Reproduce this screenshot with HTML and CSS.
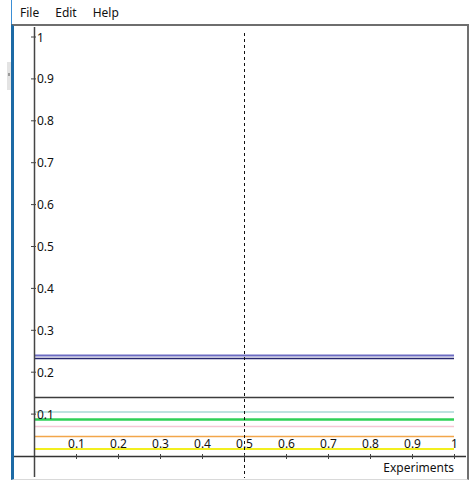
FILE: index.html
```html
<!DOCTYPE html>
<html lang="en">
<head>
<meta charset="utf-8">
<title>Experiments</title>
<link rel="stylesheet" href="styles.css">
</head>
<body>
<div class="app">
  <aside class="gutter">
    <div class="thumb"><span class="grip"></span></div>
  </aside>
  <div class="main">
    <nav class="menubar">
      <span class="menu-item">File</span>
      <span class="menu-item">Edit</span>
      <span class="menu-item">Help</span>
    </nav>
    <section class="panel">
      <svg class="chart" width="453" height="453" viewBox="14 26 453 453" xmlns="http://www.w3.org/2000/svg">
        <!-- series -->
        <g class="series">
          <line x1="34" x2="454" y1="355.5" y2="355.5" stroke="#6b6bc2" stroke-width="2"/>
          <line x1="34" x2="454" y1="358.5" y2="358.5" stroke="#26266e" stroke-width="1.3"/>
          <line x1="34" x2="454" y1="397.5" y2="397.5" stroke="#3c3c3c" stroke-width="1.3"/>
          <line x1="34" x2="454" y1="412" y2="412" stroke="#a9d9d6" stroke-width="1.5"/>
          <line x1="34" x2="454" y1="419.5" y2="419.5" stroke="#2fd057" stroke-width="2.5"/>
          <line x1="34" x2="454" y1="426.5" y2="426.5" stroke="#f6c6d4" stroke-width="1.3"/>
          <line x1="34" x2="454" y1="436.5" y2="436.5" stroke="#f2a64a" stroke-width="1.4"/>
          <line x1="34" x2="454" y1="449" y2="449" stroke="#f2ef1e" stroke-width="2"/>
        </g>
        <!-- marker at 0.5 -->
        <line x1="244.5" x2="244.5" y1="33" y2="478" stroke="#111" stroke-width="1" stroke-dasharray="3 3"/>
        <!-- axes -->
        <line x1="34.5" x2="34.5" y1="27" y2="477" stroke="#444" stroke-width="1.5"/>
        <line x1="12" x2="466" y1="456.5" y2="456.5" stroke="#333" stroke-width="1.3"/>
        <g class="yticks" stroke="#444" stroke-width="1">
          <line x1="31" x2="36" y1="37" y2="37"/>
          <line x1="31" x2="36" y1="78.9" y2="78.9"/>
          <line x1="31" x2="36" y1="120.8" y2="120.8"/>
          <line x1="31" x2="36" y1="162.7" y2="162.7"/>
          <line x1="31" x2="36" y1="204.6" y2="204.6"/>
          <line x1="31" x2="36" y1="246.5" y2="246.5"/>
          <line x1="31" x2="36" y1="288.4" y2="288.4"/>
          <line x1="31" x2="36" y1="330.3" y2="330.3"/>
          <line x1="31" x2="36" y1="372.2" y2="372.2"/>
          <line x1="31" x2="36" y1="414.1" y2="414.1"/>
        </g>
        <g class="ylabels">
          <text x="37" y="37">1</text>
          <text x="37" y="78.9">0.9</text>
          <text x="37" y="120.8">0.8</text>
          <text x="37" y="162.7">0.7</text>
          <text x="37" y="204.6">0.6</text>
          <text x="37" y="246.5">0.5</text>
          <text x="37" y="288.4">0.4</text>
          <text x="37" y="330.3">0.3</text>
          <text x="37" y="372.2">0.2</text>
          <text x="37" y="414.1">0.1</text>
        </g>
        <g class="xticks" stroke="#444" stroke-width="1">
          <line x1="76.5" x2="76.5" y1="454" y2="459"/>
          <line x1="118.5" x2="118.5" y1="454" y2="459"/>
          <line x1="160.5" x2="160.5" y1="454" y2="459"/>
          <line x1="202.5" x2="202.5" y1="454" y2="459"/>
          <line x1="244.5" x2="244.5" y1="454" y2="459"/>
          <line x1="286.5" x2="286.5" y1="454" y2="459"/>
          <line x1="328.5" x2="328.5" y1="454" y2="459"/>
          <line x1="370.5" x2="370.5" y1="454" y2="459"/>
          <line x1="412.5" x2="412.5" y1="454" y2="459"/>
          <line x1="454.5" x2="454.5" y1="454" y2="459"/>
        </g>
        <g class="xlabels">
          <text x="76.5" y="448">0.1</text>
          <text x="118.5" y="448">0.2</text>
          <text x="160.5" y="448">0.3</text>
          <text x="202.5" y="448">0.4</text>
          <text x="244.5" y="448">0.5</text>
          <text x="286.5" y="448">0.6</text>
          <text x="328.5" y="448">0.7</text>
          <text x="370.5" y="448">0.8</text>
          <text x="412.5" y="448">0.9</text>
          <text x="454.5" y="448">1</text>
        </g>
        <text class="axis-title" x="454" y="472">Experiments</text>
      </svg>
    </section>
  </div>
</div>
</body>
</html>
```
FILE: styles.css
```css
html, body {
  margin: 0;
  padding: 0;
  background: #ffffff;
}

body {
  width: 474px;
  height: 486px;
  overflow: hidden;
  font-family: "Noto Sans", "Open Sans", sans-serif;
  color: #000;
}

.app {
  display: flex;
  align-items: flex-start;
}

/* narrow strip on the far left with a small scroll thumb */
.gutter {
  width: 11px;
  flex: none;
  padding-top: 62px;
  display: flex;
  justify-content: flex-end;
}

.thumb {
  width: 4px;
  height: 28px;
  background: #e3e3e3;
  display: flex;
  justify-content: center;
  padding-top: 11px;
  box-sizing: border-box;
}

.grip {
  width: 2px;
  height: 3px;
  background: #9a9a9a;
}

.main {
  display: flex;
  flex-direction: column;
}

.menubar {
  height: 24px;
  display: flex;
  align-items: center;
  gap: 16px;
  padding-left: 8px;
  padding-top: 2px;
  border-left: 1px solid #3b8fd6;
  font-size: 12px;
  line-height: 1;
  box-sizing: border-box;
}

.menu-item {
  color: #111;
}

.panel {
  width: 453px;
  height: 453px;
  border-top: 2px solid #6e6e6e;
  border-right: 2px solid #707070;
  border-bottom: 1px solid #d9d9d9;
  border-left: 3px solid #1d6aa5;
}

.chart {
  display: block;
}

.chart text {
  font-family: "Noto Sans", "Open Sans", sans-serif;
  font-size: 12px;
  fill: #111;
}

.ylabels text {
  dominant-baseline: central;
}

.xlabels text {
  text-anchor: middle;
}

.chart .axis-title {
  text-anchor: end;
}
```
